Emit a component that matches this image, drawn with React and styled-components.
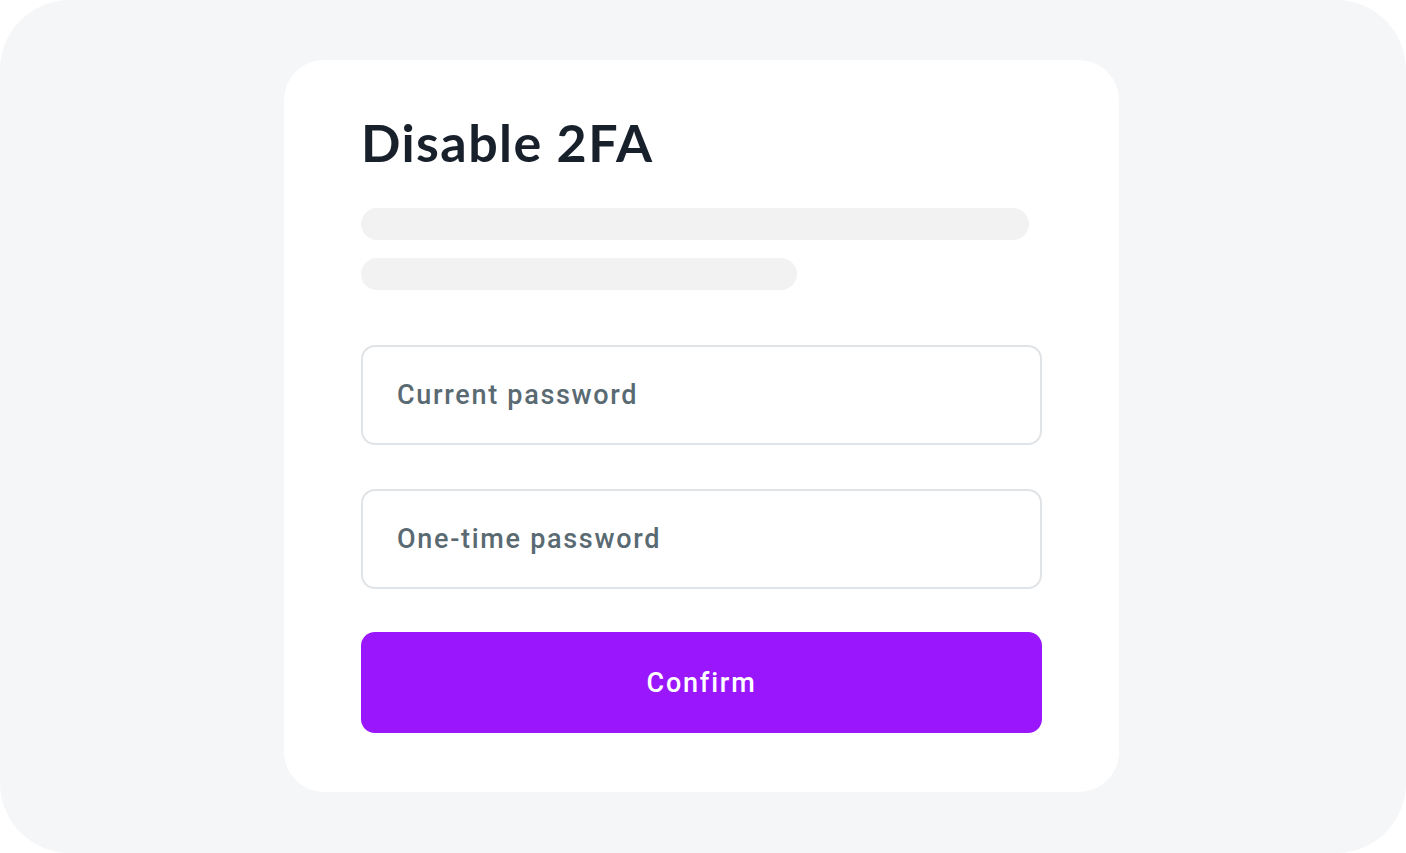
import React from "react";
import styled, { createGlobalStyle } from "styled-components";

const GlobalStyle = createGlobalStyle`
  html, body {
    margin: 0;
    padding: 0;
    background: #ffffff;
  }
  * {
    box-sizing: border-box;
  }
`;

const Screen = styled.div`
  width: 1406px;
  height: 853px;
  background: #f5f6f8;
  border-radius: 70px;
  display: flex;
  padding: 60px 0 0 284px;
`;

const Card = styled.div`
  width: 835px;
  height: 732px;
  background: #ffffff;
  border-radius: 40px;
  padding: 51px 77px 0;
  display: flex;
  flex-direction: column;
`;

const Title = styled.h1`
  margin: 0;
  font-family: "Lato", "Noto Sans", sans-serif;
  font-weight: 700;
  font-size: 52px;
  line-height: 62px;
  letter-spacing: 1.4px;
  color: #17202b;
`;

const Lines = styled.div`
  display: flex;
  flex-direction: column;
  gap: 18px;
  margin-top: 35px;
`;

const Line = styled.div`
  width: ${(p) => p.$width}px;
  height: 32px;
  border-radius: 16px;
  background: #f2f2f2;
`;

const Form = styled.form`
  display: flex;
  flex-direction: column;
  gap: 44px;
  margin-top: 55px;
`;

const Field = styled.input`
  width: 681px;
  height: 100px;
  border: 2px solid #e0e4e7;
  border-radius: 14px;
  padding: 0 34px;
  font-family: "Roboto", sans-serif;
  font-weight: 500;
  font-size: 27px;
  letter-spacing: 1.7px;
  color: #5a6a72;
  background: #ffffff;
  outline: none;

  &::placeholder {
    color: #5a6a72;
    opacity: 1;
  }
`;

const Button = styled.button`
  width: 681px;
  height: 101px;
  margin-top: -1px;
  border: none;
  border-radius: 14px;
  background: #9a16fc;
  color: #ffffff;
  font-family: "Roboto", sans-serif;
  font-weight: 500;
  font-size: 27px;
  letter-spacing: 1.8px;
  cursor: pointer;
`;

export default function App() {
  return (
    <>
      <GlobalStyle />
      <Screen>
        <Card>
          <Title>Disable 2FA</Title>
          <Lines>
            <Line $width={668} />
            <Line $width={436} />
          </Lines>
          <Form onSubmit={(e) => e.preventDefault()}>
            <Field type="password" placeholder="Current password" />
            <Field type="password" placeholder="One-time password" />
            <Button type="submit">Confirm</Button>
          </Form>
        </Card>
      </Screen>
    </>
  );
}
